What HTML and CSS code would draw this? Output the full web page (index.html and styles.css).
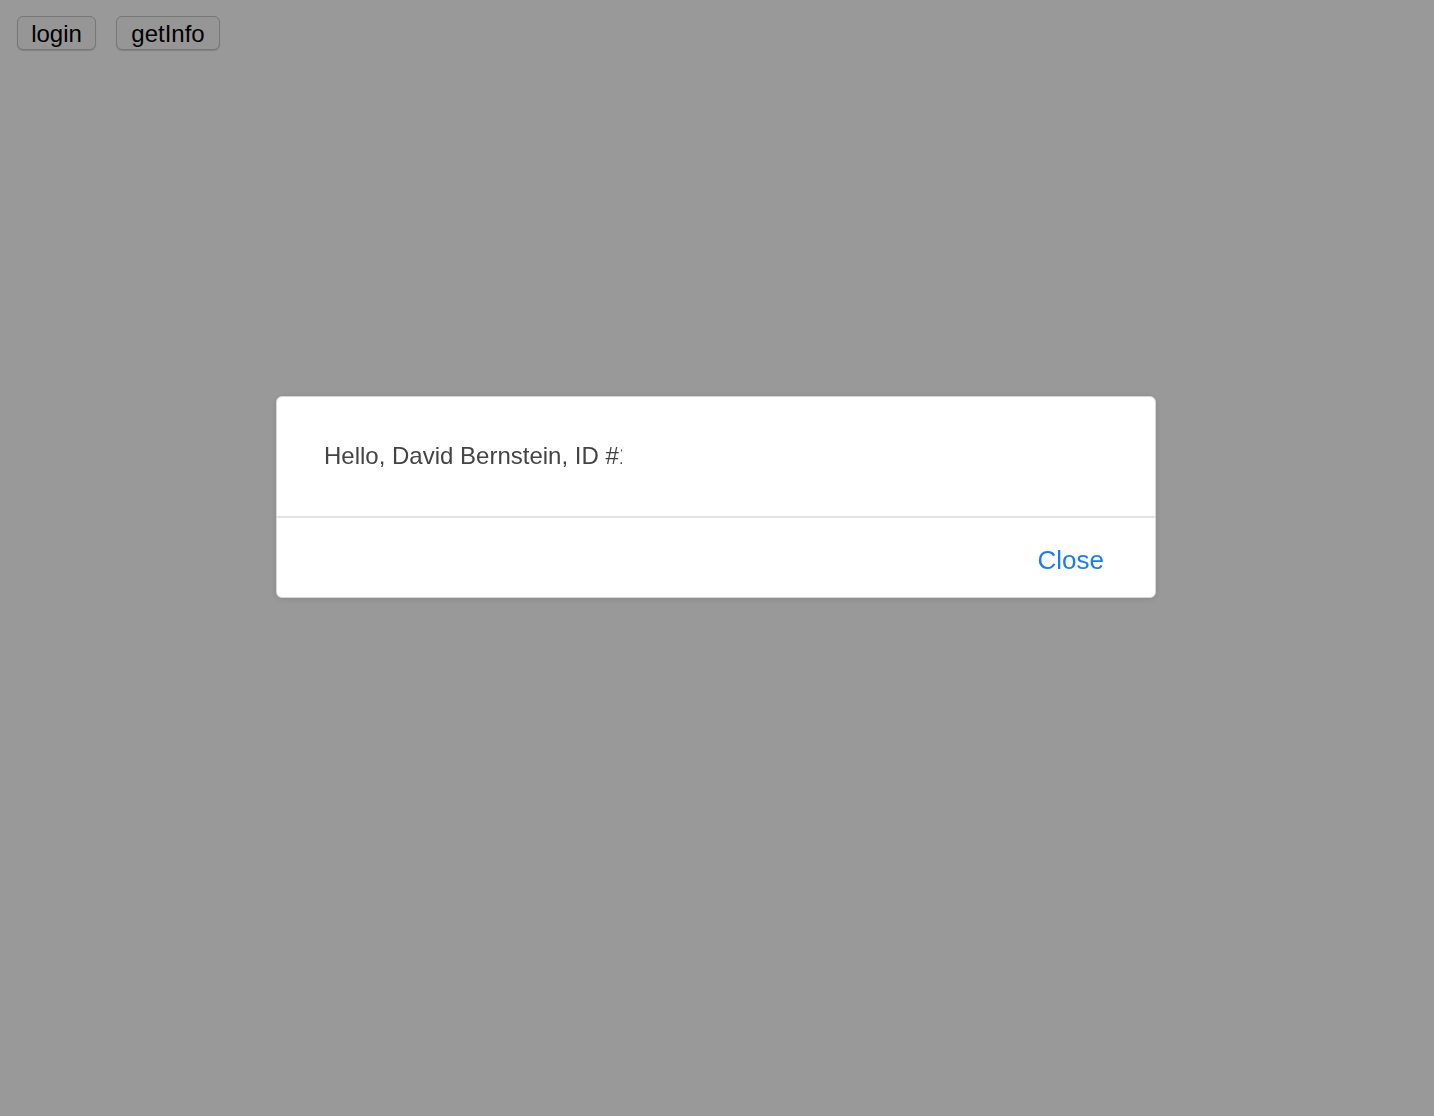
FILE: index.html
```html
<!DOCTYPE html>
<html>
<head>
<meta charset="utf-8">
<link rel="stylesheet" href="styles.css">
</head>
<body>
<div class="toolbar">
  <button class="btn">login</button>
  <button class="btn">getInfo</button>
</div>
<div class="overlay">
  <div class="modal">
    <div class="modal-body"><span class="msg">Hello, David Bernstein, ID #1</span></div>
    <div class="modal-footer"><span class="close">Close</span></div>
  </div>
</div>
</body>
</html>
```
FILE: styles.css
```css
html, body {
  margin: 0;
  padding: 0;
  height: 100%;
  background: #ffffff;
  font-family: "Liberation Sans", Arial, sans-serif;
}
.toolbar {
  display: flex;
  gap: 20px;
  padding: 16px 0 0 17px;
}
.btn {
  font-family: "Liberation Sans", Arial, sans-serif;
  font-size: 24px;
  height: 34px;
  padding: 2px 0 0 0;
  border: 1px solid #c6c6c6;
  border-radius: 6px;
  background: #fbfbfb;
  color: #000;
  line-height: 30px;
  box-shadow: 0 1px 1px rgba(0, 0, 0, 0.15);
}
.btn:first-child { width: 79px; }
.btn:last-child { width: 104px; }
.overlay {
  position: fixed;
  inset: 0;
  background: rgba(0, 0, 0, 0.4);
}
.modal {
  position: absolute;
  left: 276px;
  top: 396px;
  width: 878px;
  background: #fff;
  border: 1px solid #d6d6d6;
  border-radius: 6px;
  box-shadow: 0 1px 6px rgba(0, 0, 0, 0.12);
}
.modal-body {
  height: 121px;
  box-sizing: border-box;
  padding: 0 0 0 47px;
  display: flex;
  align-items: center;
  border-bottom: 2px solid #e2e2e2;
  color: #444;
  font-size: 24px;
}
.msg {
  display: inline-block;
  width: 298px;
  overflow: hidden;
  white-space: nowrap;
  padding-bottom: 2px;
}
.modal-footer {
  height: 79px;
  display: flex;
  align-items: center;
  justify-content: flex-end;
  padding-right: 51px;
}
.close {
  color: #1a7cf7;
  font-size: 26px;
  padding-top: 6px;
}
```
